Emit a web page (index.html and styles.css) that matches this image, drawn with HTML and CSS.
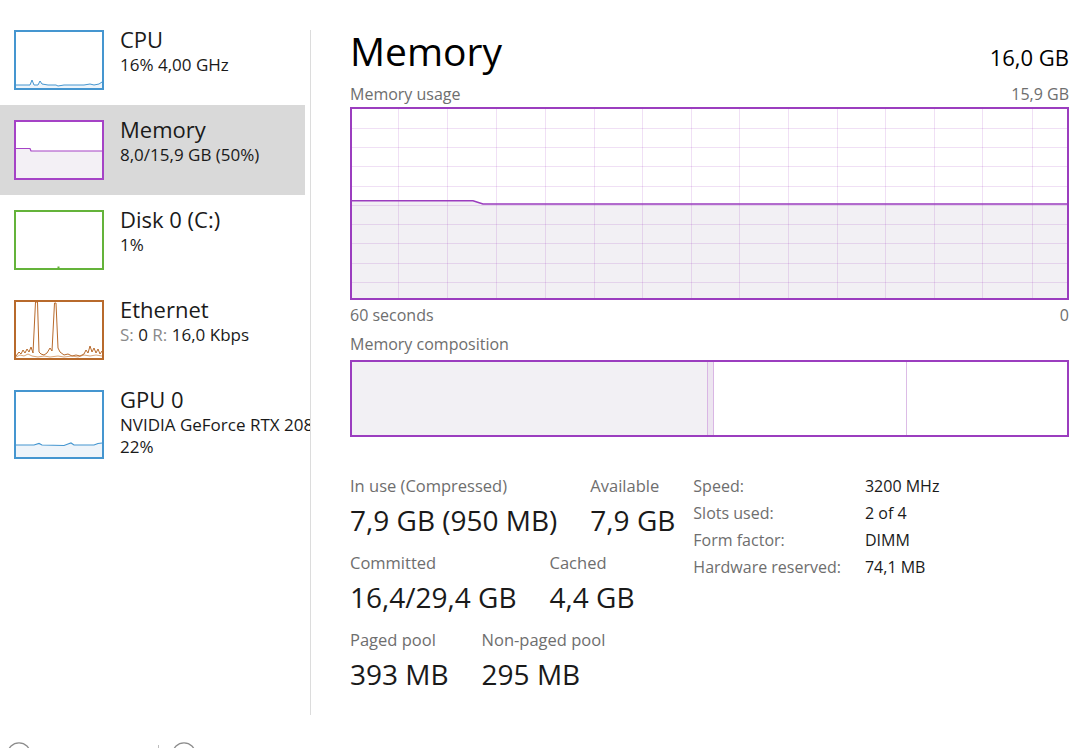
FILE: index.html
```html
<!DOCTYPE html>
<html lang="en">
<head>
<meta charset="utf-8">
<title>Task Manager - Memory</title>
<link rel="stylesheet" href="styles.css">
</head>
<body>
<div class="app">
  <nav class="sidebar">
    <div class="item">
      <svg class="thumb" width="90" height="60" viewBox="0 0 90 60">
        <rect x="1" y="1" width="88" height="58" fill="#fff" stroke="#4596d0" stroke-width="2"/>
        <polygon points="2,55 12,55 16,55 18,50 20,55 24,55 26,51 28,54 34,55 42,55 44,56 50,55 58,55 64,55 70,55 76,54 80,55 85,54 88,52 88,58 2,58" fill="#eef5fb"/>
        <polyline points="2,55 12,55 16,55 18,50 20,55 24,55 26,51 28,54 34,55 42,55 44,56 50,55 58,55 64,55 70,55 76,54 80,55 85,54 88,52" fill="none" stroke="#4596d0" stroke-width="1"/>
      </svg>
      <div class="info">
        <div class="name">CPU</div>
        <div class="sub">16% 4,00 GHz</div>
      </div>
    </div>
    <div class="item selected">
      <svg class="thumb" width="90" height="60" viewBox="0 0 90 60">
        <rect x="1" y="1" width="88" height="58" fill="#fff" stroke="#a543c6" stroke-width="2"/>
        <polygon points="2,28.5 16,28.5 17,31 88,31 88,58 2,58" fill="#f3f0f5"/>
        <polyline points="2,28.5 16,28.5 17,31 88,31" fill="none" stroke="#a543c6" stroke-width="1.2"/>
      </svg>
      <div class="info">
        <div class="name">Memory</div>
        <div class="sub">8,0/15,9 GB (50%)</div>
      </div>
    </div>
    <div class="item">
      <svg class="thumb" width="90" height="60" viewBox="0 0 90 60">
        <rect x="1" y="1" width="88" height="58" fill="#fff" stroke="#64b33a" stroke-width="2"/>
        <rect x="43.5" y="56.5" width="2" height="1.5" fill="#64b33a"/>
      </svg>
      <div class="info">
        <div class="name">Disk 0 (C:)</div>
        <div class="sub">1%</div>
      </div>
    </div>
    <div class="item">
      <svg class="thumb" width="90" height="60" viewBox="0 0 90 60">
        <rect x="1" y="1" width="88" height="58" fill="#fff" stroke="#b86a2c" stroke-width="2"/>
        <polyline points="2,57 6,55 10,56 14,54 18,56 24,57 30,56 36,57 44,56 50,57 58,56 64,57 70,55 76,56 82,55 88,56" fill="none" stroke="#d9a67c" stroke-width="1"/>
        <polyline points="2,56 5,52 7,54 9,50 11,53 13,49 15,52 17,47 19,53 21.5,2 23.5,2 25,52 27,54 30,55 33,53 36,48 38,51 40.5,3 42,3 44,48 46,52 50,55 54,54 58,56 62,55 66,56 70,54 72,50 74,53 76,46 78,52 80,48 82,53 84,49 86,54 88,51" fill="none" stroke="#b86a2c" stroke-width="1"/>
      </svg>
      <div class="info">
        <div class="name">Ethernet</div>
        <div class="sub"><span class="dim">S:</span> 0 <span class="dim">R:</span> 16,0 Kbps</div>
      </div>
    </div>
    <div class="item gpu">
      <svg class="thumb" width="90" height="69" viewBox="0 0 90 69">
        <rect x="1" y="1" width="88" height="67" fill="#fff" stroke="#4596d0" stroke-width="2"/>
        <polygon points="2,55 20,55 25,53.5 28,55 50,55.5 54,54 57,53 60,55 80,55 84,53.5 88,53 88,67 2,67" fill="#eef4fa"/>
        <polyline points="2,55 20,55 25,53.5 28,55 50,55.5 54,54 57,53 60,55 80,55 84,53.5 88,53" fill="none" stroke="#4596d0" stroke-width="1.2"/>
      </svg>
      <div class="info">
        <div class="name">GPU 0</div>
        <div class="sub">NVIDIA GeForce RTX 2080</div>
        <div class="sub">22%</div>
      </div>
    </div>
  </nav>
  <div class="divider"></div>
  <main class="main">
    <div class="head">
      <h1 class="title">Memory</h1>
      <div class="capacity">16,0 GB</div>
    </div>
    <div class="caption top"><span>Memory usage</span><span>15,9 GB</span></div>
    <svg class="graph" width="719" height="193" viewBox="0 0 719 193">
      <rect x="0" y="0" width="719" height="193" fill="#fff"/>
      <polygon points="0,93.7 123,93.7 133,97 719,97 719,193 0,193" fill="#f2f0f4"/>
      <g stroke="#8b12ae" stroke-opacity="0.13" stroke-width="1">
        <line x1="48.5" y1="0" x2="48.5" y2="193"/>
        <line x1="97.5" y1="0" x2="97.5" y2="193"/>
        <line x1="146.5" y1="0" x2="146.5" y2="193"/>
        <line x1="195.5" y1="0" x2="195.5" y2="193"/>
        <line x1="244.5" y1="0" x2="244.5" y2="193"/>
        <line x1="292.5" y1="0" x2="292.5" y2="193"/>
        <line x1="341.5" y1="0" x2="341.5" y2="193"/>
        <line x1="389.5" y1="0" x2="389.5" y2="193"/>
        <line x1="438.5" y1="0" x2="438.5" y2="193"/>
        <line x1="487.5" y1="0" x2="487.5" y2="193"/>
        <line x1="535.5" y1="0" x2="535.5" y2="193"/>
        <line x1="584.5" y1="0" x2="584.5" y2="193"/>
        <line x1="632.5" y1="0" x2="632.5" y2="193"/>
        <line x1="682.5" y1="0" x2="682.5" y2="193"/>
        <line x1="0" y1="21.5" x2="719" y2="21.5"/>
        <line x1="0" y1="40.5" x2="719" y2="40.5"/>
        <line x1="0" y1="59.5" x2="719" y2="59.5"/>
        <line x1="0" y1="79.5" x2="719" y2="79.5"/>
        <line x1="0" y1="98.5" x2="719" y2="98.5"/>
        <line x1="0" y1="117.5" x2="719" y2="117.5"/>
        <line x1="0" y1="136.5" x2="719" y2="136.5"/>
        <line x1="0" y1="156.5" x2="719" y2="156.5"/>
        <line x1="0" y1="175.5" x2="719" y2="175.5"/>
      </g>
      <polyline points="0,93.7 123,93.7 133,97 719,97" fill="none" stroke="#9b3dbf" stroke-width="1.6"/>
      <rect x="1" y="1" width="717" height="191" fill="none" stroke="#9b3dbf" stroke-width="2"/>
    </svg>
    <div class="caption axis"><span>60 seconds</span><span>0</span></div>
    <div class="caption comp"><span>Memory composition</span></div>
    <svg class="compbar" width="719" height="77" viewBox="0 0 719 77">
      <rect x="0" y="0" width="719" height="77" fill="#fff"/>
      <rect x="0" y="0" width="357" height="77" fill="#f2f0f4"/>
      <rect x="357" y="0" width="7" height="77" fill="#ede5f0"/>
      <line x1="357.5" y1="0" x2="357.5" y2="77" stroke="#d9b6e4" stroke-width="1"/>
      <line x1="363.5" y1="0" x2="363.5" y2="77" stroke="#d9b6e4" stroke-width="1"/>
      <line x1="556.5" y1="0" x2="556.5" y2="77" stroke="#dcbce6" stroke-width="1"/>
      <rect x="1" y="1" width="717" height="75" fill="none" stroke="#9b3dbf" stroke-width="2"/>
    </svg>
    <div class="details">
      <div class="stats">
        <div class="srow">
          <div class="stat"><div class="lbl">In use (Compressed)</div><div class="val">7,9 GB (950 MB)</div></div>
          <div class="stat"><div class="lbl">Available</div><div class="val">7,9 GB</div></div>
        </div>
        <div class="srow">
          <div class="stat"><div class="lbl">Committed</div><div class="val">16,4/29,4 GB</div></div>
          <div class="stat"><div class="lbl">Cached</div><div class="val">4,4 GB</div></div>
        </div>
        <div class="srow">
          <div class="stat"><div class="lbl">Paged pool</div><div class="val">393 MB</div></div>
          <div class="stat"><div class="lbl">Non-paged pool</div><div class="val">295 MB</div></div>
        </div>
      </div>
      <div class="specs">
        <span class="k">Speed:</span><span class="v">3200 MHz</span>
        <span class="k">Slots used:</span><span class="v">2 of 4</span>
        <span class="k">Form factor:</span><span class="v">DIMM</span>
        <span class="k">Hardware reserved:</span><span class="v">74,1 MB</span>
      </div>
    </div>
  </main>
</div>
<footer class="footer">
  <div class="flink first" aria-label="Fewer details">
    <svg width="24" height="24" viewBox="0 0 24 24"><circle cx="12" cy="12" r="11.2" fill="none" stroke="#8c8c8c" stroke-width="1.3"/><polyline points="7,14 12,9 17,14" fill="none" stroke="#555" stroke-width="1.3"/></svg>
  </div>
  <div class="fsep"></div>
  <div class="flink" aria-label="Open Resource Monitor">
    <svg width="24" height="24" viewBox="0 0 24 24"><circle cx="12" cy="12" r="11.2" fill="none" stroke="#8c8c8c" stroke-width="1.3"/><rect x="7" y="9" width="10" height="7" fill="none" stroke="#555" stroke-width="1.2"/></svg>
  </div>
</footer>
</body>
</html>
```
FILE: styles.css
```css
html, body {
  margin: 0;
  padding: 0;
}
body {
  width: 1076px;
  height: 748px;
  overflow: hidden;
  background: #ffffff;
  font-family: "Open Sans", "Noto Sans", sans-serif;
  color: #1a1a1a;
}
.app {
  display: flex;
  height: 715px;
}
.sidebar {
  width: 310px;
  flex: none;
  overflow: hidden;
  padding-top: 15px;
  box-sizing: border-box;
}
.item {
  width: 305px;
  height: 90px;
  box-sizing: border-box;
  padding: 15px 0 0 14px;
  display: flex;
  align-items: flex-start;
}
.item.gpu {
  height: 100px;
}
.item.selected {
  background: #d9d9d9;
}
.thumb {
  flex: none;
  display: block;
}
.info {
  margin-left: 16px;
  margin-top: -5px;
  white-space: nowrap;
}
.name {
  font-size: 22px;
  line-height: 29px;
  color: #1a1a1a;
}
.sub {
  font-size: 17px;
  line-height: 22px;
  color: #1a1a1a;
}
.dim {
  color: #8a8a8a;
}
.divider {
  flex: none;
  width: 1px;
  height: 685px;
  margin-top: 30px;
  background: #dcdcdc;
}
.main {
  flex: none;
  width: 719px;
  margin-left: 39px;
}
.head {
  display: flex;
  justify-content: space-between;
  align-items: baseline;
  padding-top: 26px;
}
.title {
  margin: 0;
  font-size: 39px;
  line-height: 50px;
  font-weight: 400;
  color: #000;
}
.capacity {
  font-size: 22px;
  line-height: 50px;
  color: #000;
}
.caption {
  display: flex;
  justify-content: space-between;
  font-size: 16px;
  line-height: 20px;
  color: #6e6e6e;
}
.caption.top {
  margin-top: 2px;
}
.graph {
  display: block;
  margin-top: 3px;
}
.caption.axis {
  margin-top: 5px;
}
.caption.comp {
  margin-top: 9px;
}
.compbar {
  display: block;
  margin-top: 6px;
}
.details {
  display: flex;
  gap: 18px;
  margin-top: 38px;
}
.srow {
  display: flex;
  gap: 33px;
  margin-bottom: 14px;
}
.lbl {
  font-size: 16.5px;
  line-height: 22px;
  color: #6e6e6e;
  white-space: nowrap;
}
.val {
  font-size: 28px;
  line-height: 36px;
  margin-top: 5px;
  color: #1a1a1a;
  white-space: nowrap;
}
.specs {
  display: grid;
  grid-template-columns: auto auto;
  column-gap: 24px;
  align-content: start;
  margin-top: -2px;
  font-size: 16px;
  line-height: 27px;
  white-space: nowrap;
}
.specs .k {
  color: #6e6e6e;
}
.specs .v {
  color: #1a1a1a;
}
.footer {
  display: flex;
  align-items: flex-start;
  margin-top: 27px;
  padding-left: 7px;
}
.flink {
  display: flex;
  align-items: flex-start;
}
.flink.first {
  width: 151px;
}
.fsep {
  width: 1px;
  height: 24px;
  margin: 3px 13px 0 0;
  background: #bdbdbd;
}
```
